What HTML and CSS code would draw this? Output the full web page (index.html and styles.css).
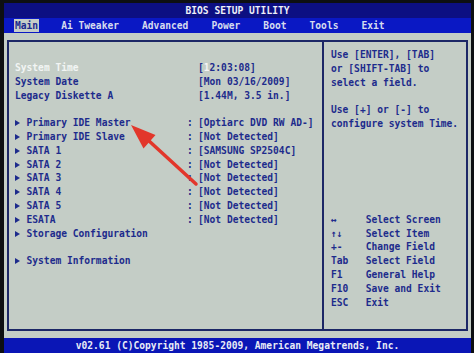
FILE: index.html
```html
<!DOCTYPE html>
<html lang="en">
<head>
  <title>BIOS Setup Utility</title>
  <meta charset="utf-8">
  <meta name="viewport" content="width=device-width, initial-scale=1">
  <link rel="stylesheet" href="styles.css">
</head>
<body>
  <div class="screen">
    <header class="title">BIOS SETUP UTILITY</header>
    <nav class="tabs">
      <span class="tab active">Main</span>
      <span class="tab">Ai Tweaker</span>
      <span class="tab">Advanced</span>
      <span class="tab">Power</span>
      <span class="tab">Boot</span>
      <span class="tab">Tools</span>
      <span class="tab">Exit</span>
    </nav>
    <main class="body">
      <div class="frame">
        <section class="settings">
          <div class="row selected">
            <span class="label">System Time</span><span></span>
            <span class="value">[<span class="cursor">1</span>2:03:08]</span>
          </div>
          <div class="row">
            <span class="label">System Date</span><span></span>
            <span class="value">[Mon 03/16/2009]</span>
          </div>
          <div class="row">
            <span class="label">Legacy Diskette A</span><span></span>
            <span class="value">[1.44M, 3.5 in.]</span>
          </div>
          <div class="row gap">
            <span class="label sub">Primary IDE Master</span><span>:</span>
            <span class="value">[Optiarc DVD RW AD-]</span>
          </div>
          <div class="row">
            <span class="label sub">Primary IDE Slave</span><span>:</span>
            <span class="value">[Not Detected]</span>
          </div>
          <div class="row">
            <span class="label sub">SATA 1</span><span>:</span>
            <span class="value">[SAMSUNG SP2504C]</span>
          </div>
          <div class="row">
            <span class="label sub">SATA 2</span><span>:</span>
            <span class="value">[Not Detected]</span>
          </div>
          <div class="row">
            <span class="label sub">SATA 3</span><span>:</span>
            <span class="value">[Not Detected]</span>
          </div>
          <div class="row">
            <span class="label sub">SATA 4</span><span>:</span>
            <span class="value">[Not Detected]</span>
          </div>
          <div class="row">
            <span class="label sub">SATA 5</span><span>:</span>
            <span class="value">[Not Detected]</span>
          </div>
          <div class="row">
            <span class="label sub">ESATA</span><span>:</span>
            <span class="value">[Not Detected]</span>
          </div>
          <div class="row">
            <span class="label sub">Storage Configuration</span>
          </div>
          <div class="row gap">
            <span class="label sub">System Information</span>
          </div>
        </section>
        <aside class="help">
          <p>Use [ENTER], [TAB]<br>or [SHIFT-TAB] to<br>select a field.</p>
          <p>Use [+] or [-] to<br>configure system Time.</p>
          <dl class="keys">
            <dt>↔</dt><dd>Select Screen</dd>
            <dt>↑↓</dt><dd>Select Item</dd>
            <dt>+-</dt><dd>Change Field</dd>
            <dt>Tab</dt><dd>Select Field</dd>
            <dt>F1</dt><dd>General Help</dd>
            <dt>F10</dt><dd>Save and Exit</dd>
            <dt>ESC</dt><dd>Exit</dd>
          </dl>
        </aside>
      </div>
    </main>
    <footer class="footer">v02.61 (C)Copyright 1985-2009, American Megatrends, Inc.</footer>
  </div>

  <svg class="annotation" width="474" height="353" viewBox="0 0 474 353">
    <line x1="196" y1="184" x2="148" y2="140" stroke="#e2372b" stroke-width="3.5" stroke-linecap="round"/>
    <polygon points="131,125 155.5,135.1 143.5,148.5" fill="#e2372b"/>
  </svg>
</body>
</html>
```

FILE: styles.css
```css
body {
  background-color: #0d0f12;
  color: #1d2b8c;
  font-family: "DejaVu Sans Mono", monospace;
  font-size: 9.6px;
  font-weight: bold;
  margin: 0;
  position: relative;
}

.screen {
  display: flex;
  flex-direction: column;
  height: 350px;
  margin: 3px 0 0 4px;
  width: 467px;
}

.title {
  background-color: #0c0f82;
  color: #eef0f8;
  height: 15px;
  line-height: 15px;
  text-align: center;
}

.tabs {
  background-color: #0a18c4;
  box-sizing: border-box;
  color: #d6dcef;
  display: flex;
  gap: calc(4ch - 2px);
  height: 15px;
  line-height: 13px;
  padding: 1px 0 1px 10px;
}

.tab {
  padding: 0 1px;
}

.tab.active {
  background-color: #c6cec8;
  color: #1b2a8e;
}

.body {
  background-color: #c4cdc6;
  box-sizing: border-box;
  flex: 1;
  padding: 7px 3px;
}

.frame {
  border: 2px solid #1c2766;
  box-sizing: border-box;
  display: flex;
  height: 100%;
}

.settings {
  border-right: 2px solid #1c2766;
  box-sizing: border-box;
  padding: 19px 0 0 6px;
  width: 315px;
}

.row {
  display: grid;
  grid-template-columns: 172px 11px auto;
  line-height: 13.8px;
  white-space: pre;
}

.row.gap {
  margin-top: 13.8px;
}

.row.selected {
  color: #f2f5f4;
}

.row.selected .value {
  color: #1d2b8c;
}

.cursor {
  color: #f4f6f6;
}

.label.sub::before {
  border-bottom: 3px solid transparent;
  border-left: 5px solid currentColor;
  border-top: 3px solid transparent;
  content: '';
  display: inline-block;
  margin-right: calc(2ch - 5px);
  vertical-align: 0;
}

.help {
  flex: 1;
  line-height: 13.8px;
  padding: 6px 0 0 7px;
}

.help p {
  margin: 0 0 13.8px;
}

.keys {
  display: grid;
  grid-template-columns: 6ch auto;
  margin: 82px 0 0;
}

.keys dd {
  margin: 0;
}

.footer {
  background-color: #0a16b6;
  color: #e8ecf6;
  height: 15px;
  line-height: 15px;
  text-align: center;
}

.annotation {
  left: 0;
  pointer-events: none;
  position: absolute;
  top: 0;
}
```
